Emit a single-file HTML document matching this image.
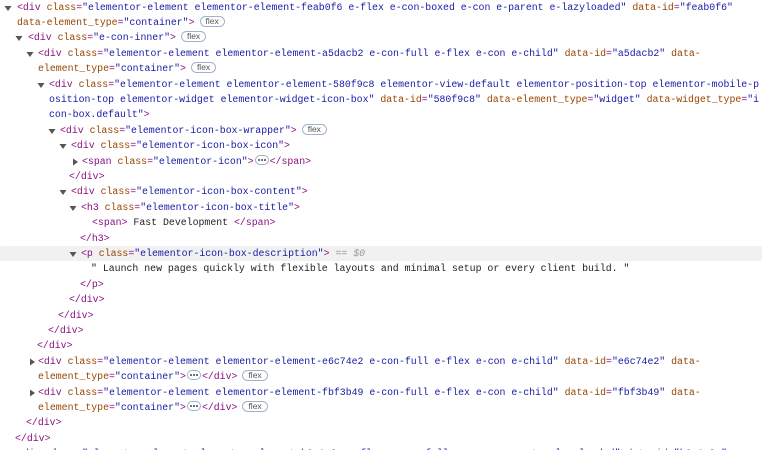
<!DOCTYPE html>
<html><head><meta charset="utf-8"><style>
html,body{margin:0;padding:0;background:#fff;width:766px;height:450px;overflow:hidden}
body{position:relative;font-family:"Liberation Mono",monospace;font-size:9.87px;color:#222}
.l{position:absolute;height:15.4px;line-height:15.4px;white-space:pre}
.t{color:#881280}.a{color:#994500}.v{color:#1a1aa6}
.ar{position:absolute;width:8px;height:8px}
.f{display:inline-block;border:1px solid #9fb2cc;border-radius:7px;font-size:8.5px;line-height:9px;padding:0 5px;color:#555;margin-left:5px;vertical-align:1px;font-family:"Liberation Sans",sans-serif}
.e{display:inline-block;width:12px;height:8px;border:1px solid #9fb2cc;border-radius:5px;vertical-align:-1px;margin:0 1px;position:relative}
.e:before{content:"";position:absolute;left:2px;top:3px;width:2px;height:2px;background:#444;border-radius:1px;box-shadow:3px 0 #444,6px 0 #444}
.hl{position:absolute;left:0;width:762px;top:246px;height:15px;background:#f1f1f1;border-radius:2px}
.g{color:#999;font-style:italic}
</style></head><body>
<svg width="0" height="0" style="position:absolute"><defs>
<symbol id="d" viewBox="0 0 8 8"><path d="M0.5 2 L7.5 2 L4 7 Z" fill="#555"/></symbol>
<symbol id="r" viewBox="0 0 8 8"><path d="M2 0.5 L7 4 L2 7.5 Z" fill="#555"/></symbol>
</defs></svg>
<div class="hl"></div>
<svg class="ar" style="left:4px;top:3.5px"><use href="#d"/></svg>
<div class="l" style="left:17px;top:-0.5px"><span class="t">&lt;div </span><span class="a">class</span><span class="t">=</span><span class="v">"elementor-element elementor-element-feab0f6 e-flex e-con-boxed e-con e-parent e-lazyloaded"</span> <span class="a">data-id</span><span class="t">=</span><span class="v">"feab0f6"</span></div>
<div class="l" style="left:17px;top:14.9px"><span class="a">data-element_type</span><span class="t">=</span><span class="v">"container"</span><span class="t">&gt;</span><span class="f">flex</span></div>
<svg class="ar" style="left:15px;top:34.3px"><use href="#d"/></svg>
<div class="l" style="left:28px;top:30.3px"><span class="t">&lt;div </span><span class="a">class</span><span class="t">=</span><span class="v">"e-con-inner"</span><span class="t">&gt;</span><span class="f">flex</span></div>
<svg class="ar" style="left:26px;top:49.7px"><use href="#d"/></svg>
<div class="l" style="left:38px;top:45.7px"><span class="t">&lt;div </span><span class="a">class</span><span class="t">=</span><span class="v">"elementor-element elementor-element-a5dacb2 e-con-full e-flex e-con e-child"</span> <span class="a">data-id</span><span class="t">=</span><span class="v">"a5dacb2"</span> <span class="a">data-</span></div>
<div class="l" style="left:38px;top:61.1px"><span class="a">element_type</span><span class="t">=</span><span class="v">"container"</span><span class="t">&gt;</span><span class="f">flex</span></div>
<svg class="ar" style="left:37px;top:80.5px"><use href="#d"/></svg>
<div class="l" style="left:49px;top:76.5px"><span class="t">&lt;div </span><span class="a">class</span><span class="t">=</span><span class="v">"elementor-element elementor-element-580f9c8 elementor-view-default elementor-position-top elementor-mobile-p</span></div>
<div class="l" style="left:49px;top:91.9px"><span class="v">osition-top elementor-widget elementor-widget-icon-box"</span> <span class="a">data-id</span><span class="t">=</span><span class="v">"580f9c8"</span> <span class="a">data-element_type</span><span class="t">=</span><span class="v">"widget"</span> <span class="a">data-widget_type</span><span class="t">=</span><span class="v">"i</span></div>
<div class="l" style="left:49px;top:107.3px"><span class="v">con-box.default"</span><span class="t">&gt;</span></div>
<svg class="ar" style="left:48px;top:126.7px"><use href="#d"/></svg>
<div class="l" style="left:60px;top:122.7px"><span class="t">&lt;div </span><span class="a">class</span><span class="t">=</span><span class="v">"elementor-icon-box-wrapper"</span><span class="t">&gt;</span><span class="f">flex</span></div>
<svg class="ar" style="left:59px;top:142.1px"><use href="#d"/></svg>
<div class="l" style="left:71px;top:138.1px"><span class="t">&lt;div </span><span class="a">class</span><span class="t">=</span><span class="v">"elementor-icon-box-icon"</span><span class="t">&gt;</span></div>
<svg class="ar" style="left:71px;top:157.5px"><use href="#r"/></svg>
<div class="l" style="left:82px;top:153.5px"><span class="t">&lt;span </span><span class="a">class</span><span class="t">=</span><span class="v">"elementor-icon"</span><span class="t">&gt;</span><span class="e"></span><span class="t">&lt;/span&gt;</span></div>
<div class="l" style="left:69px;top:168.9px"><span class="t">&lt;/div&gt;</span></div>
<svg class="ar" style="left:59px;top:188.3px"><use href="#d"/></svg>
<div class="l" style="left:71px;top:184.3px"><span class="t">&lt;div </span><span class="a">class</span><span class="t">=</span><span class="v">"elementor-icon-box-content"</span><span class="t">&gt;</span></div>
<svg class="ar" style="left:69px;top:203.7px"><use href="#d"/></svg>
<div class="l" style="left:81px;top:199.7px"><span class="t">&lt;h3 </span><span class="a">class</span><span class="t">=</span><span class="v">"elementor-icon-box-title"</span><span class="t">&gt;</span></div>
<div class="l" style="left:92px;top:215.1px"><span class="t">&lt;span&gt;</span> Fast Development <span class="t">&lt;/span&gt;</span></div>
<div class="l" style="left:80px;top:230.5px"><span class="t">&lt;/h3&gt;</span></div>
<svg class="ar" style="left:69px;top:249.9px"><use href="#d"/></svg>
<div class="l" style="left:81px;top:245.9px"><span class="t">&lt;p </span><span class="a">class</span><span class="t">=</span><span class="v">"elementor-icon-box-description"</span><span class="t">&gt;</span> <span class="g">== $0</span></div>
<div class="l" style="left:91px;top:261.3px">" Launch new pages quickly with flexible layouts and minimal setup or every client build. "</div>
<div class="l" style="left:80px;top:276.7px"><span class="t">&lt;/p&gt;</span></div>
<div class="l" style="left:69px;top:292.1px"><span class="t">&lt;/div&gt;</span></div>
<div class="l" style="left:58px;top:307.5px"><span class="t">&lt;/div&gt;</span></div>
<div class="l" style="left:48px;top:322.9px"><span class="t">&lt;/div&gt;</span></div>
<div class="l" style="left:37px;top:338.3px"><span class="t">&lt;/div&gt;</span></div>
<svg class="ar" style="left:28px;top:357.7px"><use href="#r"/></svg>
<div class="l" style="left:38px;top:353.7px"><span class="t">&lt;div </span><span class="a">class</span><span class="t">=</span><span class="v">"elementor-element elementor-element-e6c74e2 e-con-full e-flex e-con e-child"</span> <span class="a">data-id</span><span class="t">=</span><span class="v">"e6c74e2"</span> <span class="a">data-</span></div>
<div class="l" style="left:38px;top:369.1px"><span class="a">element_type</span><span class="t">=</span><span class="v">"container"</span><span class="t">&gt;</span><span class="e"></span><span class="t">&lt;/div&gt;</span><span class="f">flex</span></div>
<svg class="ar" style="left:28px;top:388.5px"><use href="#r"/></svg>
<div class="l" style="left:38px;top:384.5px"><span class="t">&lt;div </span><span class="a">class</span><span class="t">=</span><span class="v">"elementor-element elementor-element-fbf3b49 e-con-full e-flex e-con e-child"</span> <span class="a">data-id</span><span class="t">=</span><span class="v">"fbf3b49"</span> <span class="a">data-</span></div>
<div class="l" style="left:38px;top:399.9px"><span class="a">element_type</span><span class="t">=</span><span class="v">"container"</span><span class="t">&gt;</span><span class="e"></span><span class="t">&lt;/div&gt;</span><span class="f">flex</span></div>
<div class="l" style="left:26px;top:415.3px"><span class="t">&lt;/div&gt;</span></div>
<div class="l" style="left:15px;top:430.7px"><span class="t">&lt;/div&gt;</span></div>
<div class="l" style="left:17px;top:446.1px"><span class="t">&lt;div </span><span class="a">class</span><span class="t">=</span><span class="v">"elementor-element elementor-element-b0a1c2e e-flex e-con-full e-con e-parent e-lazyloaded"</span> <span class="a">data-id</span><span class="t">=</span><span class="v">"b0a1c2e"</span></div>
</body></html>
